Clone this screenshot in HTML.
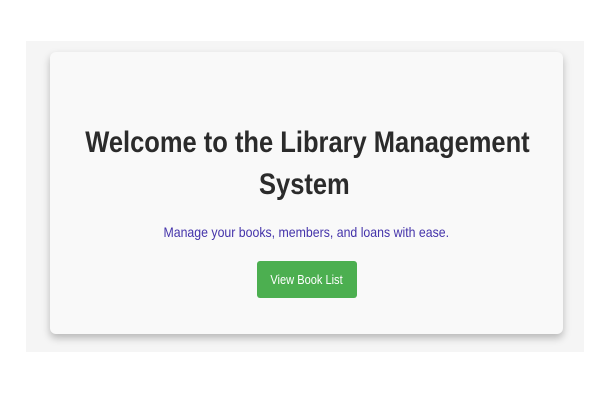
<!DOCTYPE html>
<html><head><style>
html,body{margin:0;padding:0;width:608px;height:407px;background:#fff;overflow:hidden;font-family:"Liberation Sans",sans-serif}
.bg{position:absolute;left:26px;top:41px;width:558px;height:311px;background:#f5f5f5}
.card{position:absolute;left:50px;top:52px;width:513px;height:282px;background:#f9f9f9;border-radius:6px;box-shadow:0 4px 8px rgba(0,0,0,.25)}
.h{position:absolute;left:0;width:513px;text-align:center;font-weight:bold;font-size:30px;color:#2b2b2b;line-height:42px}
.h span{display:inline-block;transform:scaleX(0.85);white-space:nowrap}
.sub{position:absolute;left:0;width:513px;top:172px;text-align:center;font-size:14px;color:#4433aa}
.sub span{display:inline-block;transform:scaleX(0.88);white-space:nowrap}
.btn{position:absolute;left:207px;top:209px;width:100px;height:37px;background:#4caf50;border-radius:3px;color:#fff;font-size:13px;line-height:37px;text-align:center}
.btn span{display:inline-block;transform:scaleX(0.85)}
</style></head><body>
<div class="bg"></div>
<div class="card">
<div class="h" style="top:70px;left:-4px"><span>Welcome to the Library Management</span></div>
<div class="h" style="top:112px;left:-2px"><span>System</span></div>
<div class="sub"><span>Manage your books, members, and loans with ease.</span></div>
<div class="btn"><span>View Book List</span></div>
</div>
</body></html>
